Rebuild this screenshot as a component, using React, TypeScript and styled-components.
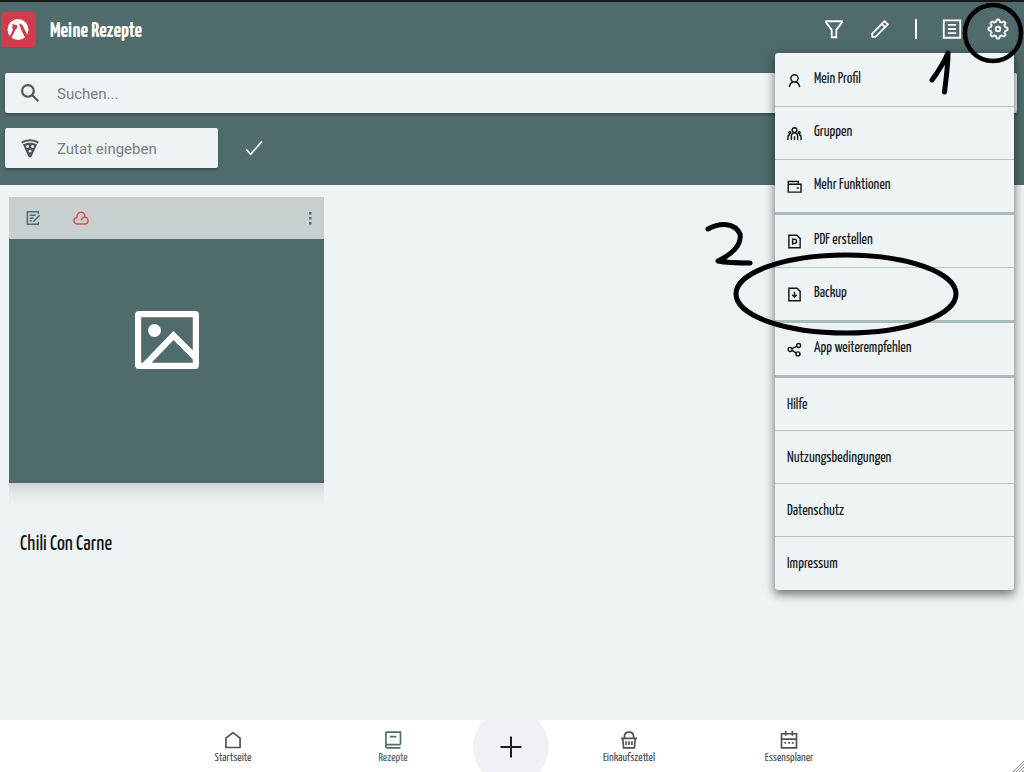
import React from "react";
import styled, { createGlobalStyle } from "styled-components";

const teal = "#506b6c";
const paper = "#eef3f6";
const narrow = `"Yanone Kaffeesatz", "Liberation Sans Narrow", "Liberation Sans", sans-serif`;

const GlobalStyle = createGlobalStyle`
  * { box-sizing: border-box; }
  body {
    margin: 0;
    background: ${paper};
    color: #1b1d1e;
    font-family: ${narrow};
  }
`;

const Page = styled.div`
  position: relative;
  min-height: 100vh;
  display: flex;
  flex-direction: column;
  overflow: hidden;
`;

const Header = styled.header`
  background: ${teal};
  border-top: 2px solid #1a1a1a;
  padding: 0 7px 17px 5px;
`;

const TitleBar = styled.div`
  display: flex;
  align-items: center;
  height: 54px;
  margin-left: -4px;
  gap: 14px;
`;

const Title = styled.h1`
  flex: 1;
  margin: 0;
  padding-top: 3px;
  color: #fff;
  font-size: 22px;
  line-height: 24px;
  font-weight: 700;
`;

const Actions = styled.div`
  display: flex;
  align-items: center;
  gap: 22px;
  padding-right: 7px;
`;

const IconButton = styled.button`
  display: flex;
  padding: 0;
  border: 0;
  background: none;
  color: inherit;
  cursor: pointer;
`;

const ToolButton = styled(IconButton)`
  padding: 0 1px;
  color: #fff;
`;

const Divider = styled.span`
  width: 2px;
  height: 20px;
  margin: 0 1px;
  background: #fff;
`;

const Field = styled.label<{ $width?: string }>`
  display: flex;
  align-items: center;
  gap: 17px;
  width: ${(p) => p.$width ?? "100%"};
  height: 40px;
  padding: 0 15px;
  background: ${paper};
  border-radius: 2px;
  box-shadow: 0 2px 3px rgba(0, 0, 0, 0.28);
  color: #555;
`;

const FieldInput = styled.input`
  flex: 1;
  min-width: 0;
  padding: 2px 0 0;
  border: 0;
  outline: 0;
  background: none;
  color: #333;
  font-family: Roboto, sans-serif;
  font-size: 15px;
  line-height: 24px;
  &::placeholder { color: #7a7e80; opacity: 1; }
`;

const SearchForm = styled.form`
  display: flex;
  flex-direction: column;
  gap: 15px;
  padding-top: 17px;
`;

const IngredientRow = styled.div`
  display: flex;
  align-items: center;
  gap: 26px;
  color: #fff;
`;

const Content = styled.main`
  flex: 1;
  padding: 12px 9px;
`;

const Card = styled.article`
  width: 315px;
`;

const CardTools = styled.div`
  display: flex;
  align-items: center;
  gap: 32px;
  height: 42px;
  padding: 0 6px 0 16px;
  background: #c7cfd1;
  color: ${teal};
`;

const MoreButton = styled(IconButton)`
  margin-left: auto;
`;

const CardImage = styled.div`
  display: flex;
  justify-content: center;
  height: 244px;
  padding-top: 72px;
  background: ${teal};
  color: #fff;
`;

const CardShade = styled.div`
  height: 22px;
  background: linear-gradient(#cfd5d6, #e3e9ea 50%, ${paper});
`;

const CardTitle = styled.h2`
  margin: 0;
  padding: 28px 11px;
  color: #111;
  font-size: 21px;
  line-height: 24px;
  font-weight: 400;
`;

const Menu = styled.nav`
  position: absolute;
  top: 53px;
  right: 10px;
  width: 239px;
  padding: 1px 0;
  background: ${paper};
  border-radius: 3px;
  box-shadow: 0 5px 8px rgba(0, 0, 0, 0.35), 0 2px 12px rgba(0, 0, 0, 0.28);
`;

const MenuItem = styled.a<{ $rule: number; $plain: boolean }>`
  display: flex;
  align-items: center;
  gap: 12px;
  height: ${(p) => 52 + p.$rule}px;
  padding: ${(p) => (p.$plain ? 1 : 0)}px 12px 0;
  border-bottom: ${(p) => p.$rule}px solid ${(p) => (p.$rule > 1 ? "#a9bbbb" : "#b7c5c7")};
  color: #141617;
  font-size: 15px;
  line-height: 20px;
  text-decoration: none;
`;

const MenuLabel = styled.span<{ $raised: boolean }>`
  padding-bottom: ${(p) => (p.$raised ? 2 : 0)}px;
`;

const BottomBar = styled.nav`
  display: flex;
  justify-content: center;
  height: 52px;
  overflow: hidden;
  background: #fff;
  padding-right: 2px;
`;

const Tab = styled.a<{ $active?: boolean }>`
  display: flex;
  flex-direction: column;
  align-items: center;
  width: 160px;
  padding-top: 10px;
  color: ${(p) => (p.$active ? teal : "#505050")};
  font-size: 12px;
  line-height: 16px;
  text-decoration: none;
`;

const AddButton = styled.button`
  display: flex;
  align-items: center;
  justify-content: center;
  flex: none;
  width: 76px;
  height: 76px;
  margin-top: -11px;
  padding: 0;
  border: 0;
  border-radius: 50%;
  background: #f2f0f6;
  color: #1c1a22;
`;

const Grip = styled.svg`
  position: absolute;
  right: 0;
  bottom: 0;
`;

const Marks = styled.svg`
  position: absolute;
  top: 0;
  right: 0;
  pointer-events: none;
`;

type IconProps = { size?: number; width?: number; children: React.ReactNode };

const Icon = ({ size = 24, width = 2, children }: IconProps) => (
  <svg
    width={size}
    height={size}
    viewBox="0 0 24 24"
    fill="none"
    stroke="currentColor"
    strokeWidth={width}
    aria-hidden="true"
  >
    {children}
  </svg>
);

const Logo = () => (
  <svg width="35" height="35" viewBox="0 0 35 35" aria-hidden="true">
    <rect width="35" height="35" rx="4" fill="#d03c4b" />
    <circle cx="17" cy="17.500" r="10.500" fill="#fff" />
    <path d="M13.700 16.500 9 26.500" stroke="#d03c4b" strokeWidth="2.200" />
    <path d="M11.500 12 16.500 13.600 15.600 16.800 13.400 18.600 11.200 16.500z" fill="#d03c4b" />
    <path d="M18.200 12c1.600-.8 2.800.2 4 2.800l5 10-2.500 2-4.300-8.500z" fill="#d03c4b" />
  </svg>
);

const MenuIcon = ({ children }: { children: React.ReactNode }) => (
  <Icon size={15} width={2.3}>
    {children}
  </Icon>
);

const menuIcons = {
  profile: (
    <MenuIcon>
      <circle cx="12" cy="8.500" r="5.800" />
      <path d="M3.800 22.500c.4-4.500 2.500-7 6-8.500M20.200 22.500c-.4-4.500-2.500-7-6-8.500" />
    </MenuIcon>
  ),
  groups: (
    <MenuIcon>
      <circle cx="12" cy="6.500" r="3.800" />
      <path d="M7 22.500v-6c0-3.500 2-5.500 5-5.500s5 2 5 5.500v6M12 16.500v6M1.500 22.500V18c0-2.500 1-4 3.500-4M22.500 22.500V18c0-2.500-1-4-3.500-4" />
      <circle cx="4.500" cy="10.500" r="1.500" />
      <circle cx="19.500" cy="10.500" r="1.500" />
    </MenuIcon>
  ),
  wallet: (
    <MenuIcon>
      <path d="M18 8.500V4H2v17h20.500V8.500H2" />
      <path d="M15.500 14.500h3.500" />
    </MenuIcon>
  ),
  pdf: (
    <MenuIcon>
      <path d="M3 2h13l5 5v15H3z" />
      <path d="M9 8.500h3a3.300 3.300 0 0 1 0 6.600H9zM9 15v2" />
    </MenuIcon>
  ),
  backup: (
    <MenuIcon>
      <path d="M3 2h13l5 5v15H3z" />
      <path d="M12 7.500v8M8.300 12.500l3.700 3.500 3.700-3.500" />
    </MenuIcon>
  ),
  share: (
    <MenuIcon>
      <circle cx="5" cy="12" r="3.200" />
      <circle cx="18.500" cy="5.500" r="3.200" />
      <circle cx="17.500" cy="19" r="3.200" />
      <path d="M8 10.500l7.500-3.500M8 13.500l6.500 4" />
    </MenuIcon>
  ),
};

const menu: { label: string; icon?: keyof typeof menuIcons; rule: number }[] = [
  { label: "Mein Profil", icon: "profile", rule: 1 },
  { label: "Gruppen", icon: "groups", rule: 1 },
  { label: "Mehr Funktionen", icon: "wallet", rule: 3 },
  { label: "PDF erstellen", icon: "pdf", rule: 1 },
  { label: "Backup", icon: "backup", rule: 3 },
  { label: "App weiterempfehlen", icon: "share", rule: 3 },
  { label: "Hilfe", rule: 1 },
  { label: "Nutzungsbedingungen", rule: 1 },
  { label: "Datenschutz", rule: 1 },
  { label: "Impressum", rule: 0 },
];

// Eight-toothed outline of the settings wheel.
const gearPath = (() => {
  const points = Array.from({ length: 96 }, (_, i) => {
    const a = (i / 96) * Math.PI * 2;
    const wave = Math.max(-0.5, Math.min(0.5, Math.cos(a * 8)));
    const r = 9.2 + wave * 2.4;
    return `${(12 + r * Math.cos(a)).toFixed(2)} ${(12 + r * Math.sin(a)).toFixed(2)}`;
  });
  return `M${points.join("L")}Z`;
})();

export default function App() {
  return (
    <Page>
      <GlobalStyle />
      <Header>
        <TitleBar>
          <Logo />
          <Title>Meine Rezepte</Title>
          <Actions>
            <ToolButton aria-label="Filter">
              <Icon size={22}>
                <path d="M3.500 3.500h17v1.500l-6 8v8h-5v-8l-6-8z" />
              </Icon>
            </ToolButton>
            <ToolButton aria-label="Bearbeiten">
              <Icon size={22}>
                <path d="M3.500 20.500v-3.500L17 3.500 20.500 7 7 20.500zM14 6.500l3.500 3.500" strokeLinejoin="round" />
              </Icon>
            </ToolButton>
            <Divider />
            <ToolButton aria-label="Liste">
              <Icon size={22}>
                <path d="M3 2.500h18v19H3zM7.500 7.500h9M7.500 12h9M7.500 16.500h9" />
              </Icon>
            </ToolButton>
            <ToolButton aria-label="Einstellungen">
              <Icon size={22}>
                <path d={gearPath} strokeLinejoin="round" />
                <circle cx="12" cy="12" r="2.500" />
              </Icon>
            </ToolButton>
          </Actions>
        </TitleBar>
        <SearchForm onSubmit={(e) => e.preventDefault()}>
          <Field>
            <Icon size={20} width={2.6}>
              <circle cx="9.500" cy="9.500" r="7" />
              <path d="M14.500 14.500l7.500 7.500" />
            </Icon>
            <FieldInput aria-label="Suchen" placeholder="Suchen..." />
          </Field>
          <IngredientRow>
            <Field $width="213px">
              <svg width="20" height="20" viewBox="0 0 24 24" aria-hidden="true">
                <path d="M2 5.500C7 1.800 17 1.800 22 5.500" fill="none" stroke="currentColor" strokeWidth="2.600" />
                <path
                  d="M3.500 7.800C8 5 16 5 20.500 7.800L13.500 23h-3zM9 8.500a1.700 1.700 0 1 0 .1 0zM15 8.500a1.700 1.700 0 1 0 .1 0zM12 14a1.700 1.700 0 1 0 .1 0z"
                  fill="currentColor"
                  fillRule="evenodd"
                />
              </svg>
              <FieldInput aria-label="Zutat" placeholder="Zutat eingeben" />
            </Field>
            <IconButton type="submit" aria-label="Zutat bestätigen">
              <Icon size={20}>
                <path d="M2.500 13.500l5.500 6L21.500 4" />
              </Icon>
            </IconButton>
          </IngredientRow>
        </SearchForm>
      </Header>

      <Content>
        <Card>
          <CardTools>
            <IconButton aria-label="Rezept bearbeiten">
              <Icon size={16} width={2.2}>
                <path d="M20 5.500V2.500H3.500v19H20V18M7 8h9M7 12h6M7 16h3" />
                <path d="M12.500 17.500l9.500-9.500" />
              </Icon>
            </IconButton>
            <IconButton aria-label="Nicht gesichert">
              <svg width="16" height="16" viewBox="0 0 24 24" fill="none" stroke="#dc5450" strokeWidth="2.200" aria-hidden="true">
                <path d="M12.500 15.500c.5-3 2.500-4.500 5-4.500 3 0 5 2 5 4.800S20.500 21 17.500 21H7c-3.300 0-5.500-2-5.500-5s2-4.500 4.500-4.800C5.500 6.500 8 3.500 12 3.500c3.500 0 5.800 2.500 6 7.300" />
              </svg>
            </IconButton>
            <MoreButton aria-label="Mehr">
              <svg width="16" height="16" viewBox="0 0 16 16" fill="currentColor" aria-hidden="true">
                <rect x="7" y="2" width="2.500" height="2.500" />
                <rect x="7" y="7" width="2.500" height="2.500" />
                <rect x="7" y="12" width="2.500" height="2.500" />
              </svg>
            </MoreButton>
          </CardTools>
          <CardImage>
            <svg width="64" height="58" viewBox="0 0 64 58" aria-hidden="true">
              <rect x="3" y="3" width="58" height="52" rx="1" fill="none" stroke="currentColor" strokeWidth="6.400" />
              <circle cx="19.500" cy="19.500" r="6.500" fill="currentColor" />
              <path d="M9 55 38.500 24.500 61 47" fill="none" stroke="currentColor" strokeWidth="6.400" />
            </svg>
          </CardImage>
          <CardShade />
          <CardTitle>Chili Con Carne</CardTitle>
        </Card>
      </Content>

      <BottomBar aria-label="Hauptnavigation">
        <Tab href="#start">
          <Icon size={20}>
            <path d="M3.500 21V9.800L12 3.200l8.500 6.600V21z" strokeLinejoin="round" />
          </Icon>
          Startseite
        </Tab>
        <Tab href="#rezepte" $active>
          <Icon size={20}>
            <path d="M21 17.500V2.500H4.500a1 1 0 0 0-1 1V20a1.500 1.500 0 0 0 1.500 1.500h16M3.500 17.500H21M8.500 8h7.500" />
          </Icon>
          Rezepte
        </Tab>
        <AddButton aria-label="Rezept hinzufügen">
          <Icon size={24}>
            <path d="M12 1.500v21M1.500 12h21" />
          </Icon>
        </AddButton>
        <Tab href="#einkauf">
          <Icon size={20}>
            <path d="M2.500 10h19M4.500 10l1 11.500h13L19.500 10M6.500 10V8c0-3.500 2.500-5.500 5.500-5.500s5.500 2 5.500 5.500v2" />
            <path d="M8.500 13.500v4.500M12 13.500v4.500M15.500 13.500v4.500" />
          </Icon>
          Einkaufszettel
        </Tab>
        <Tab href="#planer">
          <Icon size={20}>
            <path d="M3 4.500h18v17H3zM3 11h18M8 1v6M16 1v6" />
            <path d="M6.500 15.500h2M11 15.500h2M15.500 15.500h2" />
          </Icon>
          Essensplaner
        </Tab>
      </BottomBar>

      <Menu aria-label="Einstellungen">
        {menu.map(({ label, icon, rule }) => (
          <MenuItem key={label} href="#" $rule={rule} $plain={!icon}>
            {icon && menuIcons[icon]}
            <MenuLabel $raised={Boolean(icon)}>{label}</MenuLabel>
          </MenuItem>
        ))}
      </Menu>

      <Grip width="12" height="12" viewBox="0 0 12 12" stroke="#888" aria-hidden="true">
        <path d="M1 12 12 1M4 12l8-8M7 12l5-5M10 12l2-2" />
      </Grip>

      <Marks
        width="324"
        height="340"
        viewBox="700 0 324 340"
        fill="none"
        stroke="#000"
        strokeWidth="5"
        strokeLinecap="round"
        strokeLinejoin="round"
        aria-hidden="true"
      >
        <circle cx="993" cy="33" r="28" strokeWidth="4.500" />
        <path d="M932 80C938 72 944 62 948 53C948 65 946 80 944.500 92" />
        <path d="M708 229C721 222 735 223 740 234C742 246 730 255 718 261C728 263 740 263 750 263" />
        <ellipse cx="846" cy="294" rx="110" ry="39" />
      </Marks>
    </Page>
  );
}
